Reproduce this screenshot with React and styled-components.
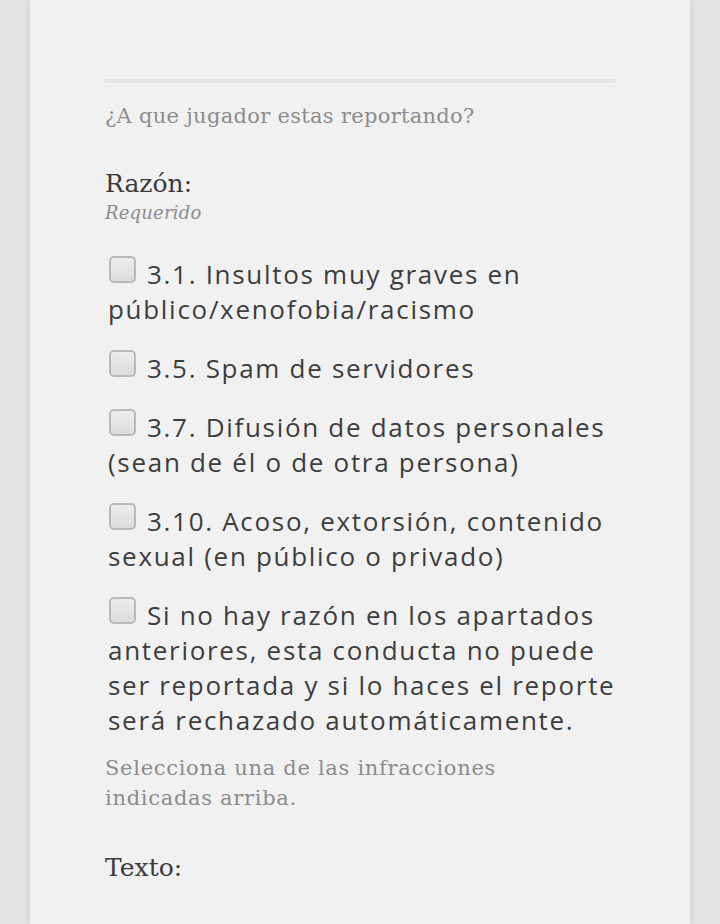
import React from "react";
import styled, { createGlobalStyle } from "styled-components";

const GlobalStyle = createGlobalStyle`
  html, body {
    margin: 0;
    padding: 0;
    background: #e4e4e4;
  }
`;

const Page = styled.div`
  width: 720px;
  height: 924px;
  overflow: hidden;
  display: flex;
  justify-content: center;
`;

const Card = styled.div`
  width: 660px;
  background: #f1f1f1;
  box-shadow: 0 0 8px rgba(0, 0, 0, 0.12);
  padding: 79px 75px 0 75px;
  box-sizing: border-box;
`;

const Divider = styled.div`
  height: 4px;
  background: #e6e6e6;
`;

const serif = `"DejaVu Serif", "Liberation Serif", serif`;

const Question = styled.p`
  margin: 18px 0 0 0;
  font-family: ${serif};
  font-size: 21px;
  line-height: 30px;
  color: #8c8c8c;
  letter-spacing: 0.3px;
`;

const Label = styled.h3`
  margin: ${(p) => p.$top || 38}px 0 0 0;
  font-family: ${serif};
  font-weight: normal;
  font-size: 25px;
  line-height: 30px;
  color: #3a3a3a;
`;

const Hint = styled.div`
  font-family: ${serif};
  font-style: italic;
  font-size: 18px;
  line-height: 24px;
  color: #8c8c8c;
  letter-spacing: 0.2px;
  margin: 2px 0 32px 0;
`;

const Options = styled.div`
  display: flex;
  flex-direction: column;
  gap: 24px;
  padding-left: 3px;
  margin-right: -24px;
`;

const Option = styled.label`
  display: block;
  font-family: "Open Sans", "Noto Sans", sans-serif;
  font-size: 26px;
  line-height: 35px;
  color: #3d3d3d;
  letter-spacing: 1.7px;
`;

const Box = styled.span`
  display: inline-block;
  width: 27px;
  height: 27px;
  box-sizing: border-box;
  border: 2px solid #b9b9b9;
  border-radius: 5px;
  background: linear-gradient(#ececec, #dcdcdc);
  margin: -1px 11px 0 1px;
  vertical-align: top;
`;

const Help = styled.p`
  margin: 15px 0 0 0;
  font-family: ${serif};
  font-size: 21px;
  line-height: 30px;
  color: #8c8c8c;
  letter-spacing: 0.7px;
  max-width: 420px;
`;

const options = [
  "3.1. Insultos muy graves en público/xenofobia/racismo",
  "3.5. Spam de servidores",
  "3.7. Difusión de datos personales (sean de él o de otra persona)",
  "3.10. Acoso, extorsión, contenido sexual (en público o privado)",
  "Si no hay razón en los apartados anteriores, esta conducta no puede ser reportada y si lo haces el reporte será rechazado automáticamente.",
];

const App = () => {
  return (
    <Page>
      <GlobalStyle />
      <Card>
        <Divider />
        <Question>¿A que jugador estas reportando?</Question>
        <Label>Razón:</Label>
        <Hint>Requerido</Hint>
        <Options>
          {options.map((text) => (
            <Option key={text}>
              <Box />
              {text}
            </Option>
          ))}
        </Options>
        <Help>Selecciona una de las infracciones indicadas arriba.</Help>
        <Label $top={40}>Texto:</Label>
      </Card>
    </Page>
  );
};

export default App;
